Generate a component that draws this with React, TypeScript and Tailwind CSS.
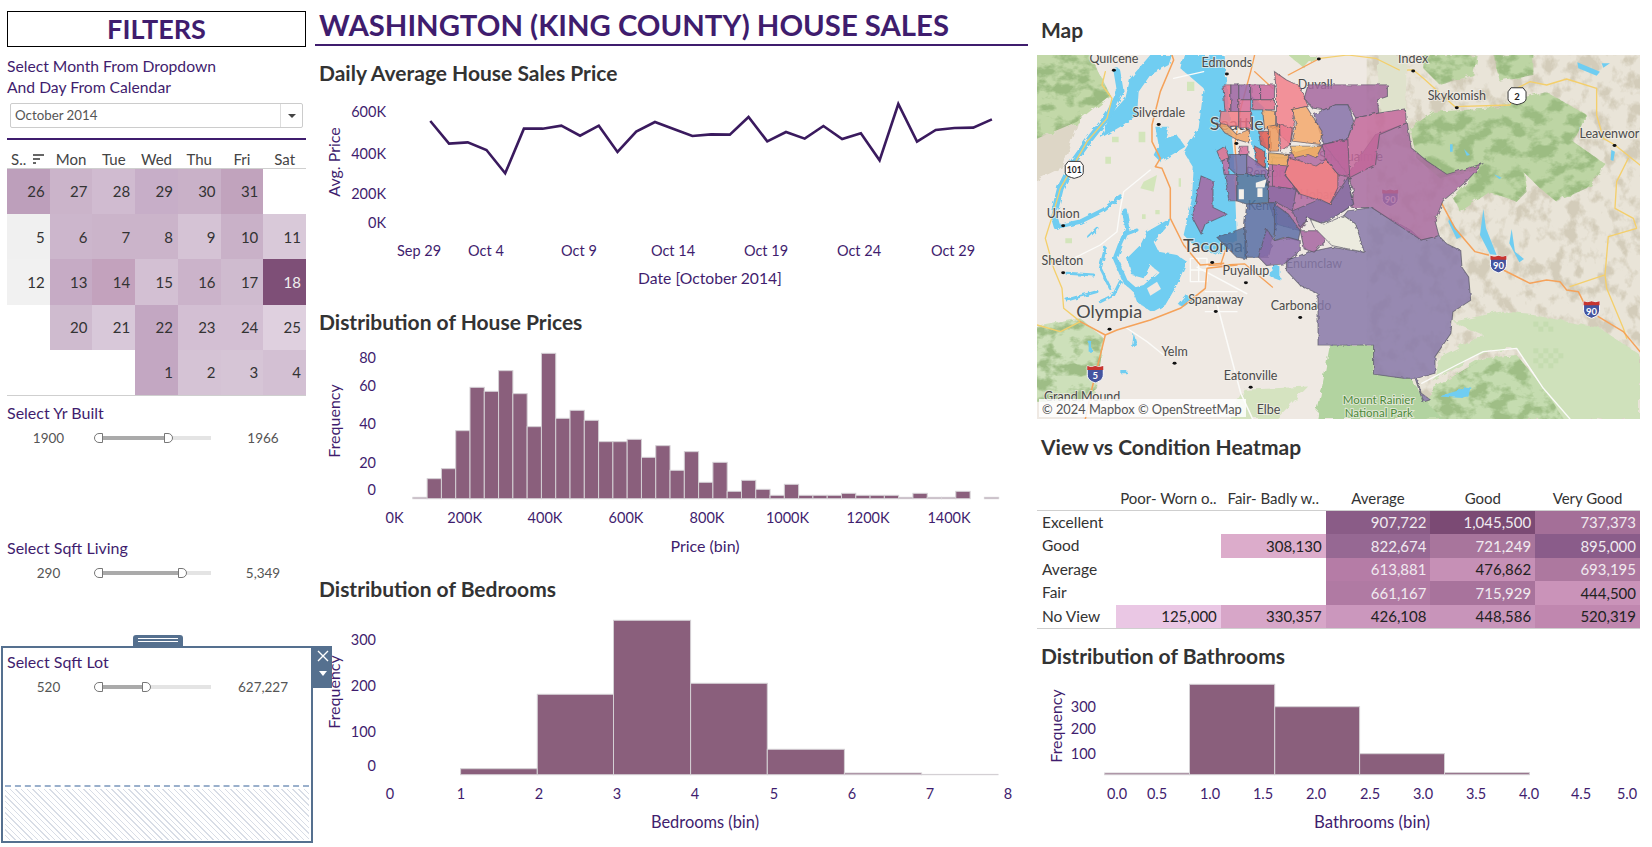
import React from "react";

const purple = "#3f1d6e";

const calendar: (null | [string, string, boolean?])[][] = [
  [["26", "#bd9fbb"], ["27", "#cbb4ca"], ["28", "#d0bbd0"], ["29", "#c7aec8"], ["30", "#c9b1c8"], ["31", "#c1a3bd"], null],
  [["5", "#f0f0f0"], ["6", "#ccb6cc"], ["7", "#cbb4ca"], ["8", "#cbb4ca"], ["9", "#d5c3d5"], ["10", "#c9b1c8"], ["11", "#d9c9d9"]],
  [["12", "#f1f1f1"], ["13", "#c6abc5"], ["14", "#c3a2bd"], ["15", "#d3c0d3"], ["16", "#cbb3ca"], ["17", "#cfbbcf"], ["18", "#7e4f77", true]],
  [null, ["20", "#cfbbcf"], ["21", "#d8c8d9"], ["22", "#c3a7c2"], ["23", "#d3bfd3"], ["24", "#d3bfd3"], ["25", "#dfd0df"]],
  [null, null, null, ["1", "#c3a7c2"], ["2", "#d5c3d5"], ["3", "#d6c5d6"], ["4", "#d3c0d3"]],
];

const heatRows: [string, (null | [string, string, boolean?])[]][] = [
  ["Excellent", [null, null, ["907,722", "#8a5c87", true], ["1,045,500", "#7b4a74", true], ["737,373", "#a46f98", true]]],
  ["Good", [null, ["308,130", "#dcaccb"], ["822,674", "#966893", true], ["721,249", "#a8759c", true], ["895,000", "#8a5c8a", true]]],
  ["Average", [null, null, ["613,881", "#b57ca6", true], ["476,862", "#c690b6"], ["693,195", "#ad789f", true]]],
  ["Fair", [null, null, ["661,167", "#b07aa3", true], ["715,929", "#a8739c", true], ["444,500", "#ca93b9"]]],
  ["No View", [["125,000", "#eac7e4"], ["330,357", "#d7a6c8"], ["426,108", "#cb97bd"], ["448,586", "#c894ba"], ["520,319", "#c087af"]]],
];

// traced from the reference, page coordinates come out of the helpers below
const lineY = [363, 431, 427, 450, 520, 386, 386, 377, 407, 377, 456, 395, 366, 387, 408, 403, 404, 351, 424, 396, 416, 378, 417, 400, 481, 312, 425, 390, 384, 383, 358];
const priceTops = [592, 536, 506, 392, 262, 274, 212, 281, 380, 160, 355, 331, 361, 425, 425, 418, 472, 437, 511, 455, 547, 487, 574, 541, 568, 586, 553, 586, 586, 586, 580, 586, 586, 586, 592, 580, 592, 592, 574, 0, 592];

const Label = ({ x, y, children, anchor = "end", size = 14.5 }: { x: number; y: number; children: React.ReactNode; anchor?: "start" | "middle" | "end"; size?: number }) => (
  <text x={x} y={y} textAnchor={anchor} dominantBaseline="central" fontSize={size} fill={purple}>
    {children}
  </text>
);

const SideLabel = ({ x, y, children }: { x: number; y: number; children: React.ReactNode }) => (
  <text x={x} y={y} textAnchor="middle" dominantBaseline="central" fontSize="16" fill={purple} transform={`rotate(-90 ${x} ${y})`}>
    {children}
  </text>
);

const Bar = ({ x1, x2, top, base }: { x1: number; x2: number; top: number; base: number }) => (
  <rect x={x1} y={top} width={x2 - x1} height={base - top} fill="#8a5f7c" stroke="#d4d0d4" strokeWidth="1" />
);

const Heading = ({ children, className }: { children: React.ReactNode; className: string }) => (
  <div className={`flex items-center pl-1 text-[21px] font-bold text-[#333333] ${className}`}>{children}</div>
);

const Slider = ({ title, min, max, thumb, className }: { title: string; min: string; max: string; thumb: number; className: string }) => (
  <div className={className}>
    <div className="h-[22px] text-[16px] leading-[22px]" style={{ color: purple }}>{title}</div>
    <div className="mt-[4px] flex h-5 items-center text-[13.5px] text-[#555555]">
      <div className="w-[83px] shrink-0 text-center">{min}</div>
      <div className="relative ml-[10px] h-1 w-[111px] shrink-0 bg-[#e4e4e4]">
        <div className="h-1 bg-[#aaaaaa]" style={{ width: thumb }} />
        <div className="absolute top-[-3px] left-[-6px] h-[10px] w-[9px] rounded-l-full border border-[#777777] bg-white" />
        <div className="absolute top-[-3px] h-[10px] w-[9px] rounded-r-full border border-[#777777] bg-white" style={{ left: thumb - 1 }} />
      </div>
      <div className="w-[104px] shrink-0 text-center">{max}</div>
    </div>
  </div>
);

const px = (x: number) => (x - 16) * 0.3964;
const py = (y: number) => (y - 130) * 0.3315;

const MapText = ({ x, y, children, size = 12.5, fill = "#4a4a4a" }: { x: number; y: number; children: React.ReactNode; size?: number; fill?: string }) => (
  <text x={px(x)} y={py(y)} textAnchor="middle" dominantBaseline="central" fontSize={size} fill={fill} stroke="#f3efe9" strokeWidth="2" paintOrder="stroke" strokeOpacity="0.7">
    {children}
  </text>
);

const Shield = ({ x, y, n, kind }: { x: number; y: number; n: string; kind: "us" | "i" }) => (
  <g transform={`translate(${px(x) - 9} ${py(y) - 9})`}>
    {kind === "i" ? (
      <>
        <path d="M1 1 L5 2 L9 1 L13 2 L17 1 V10 C17 15 12 17 9 18 C6 17 1 15 1 10 Z" fill="#44549f" stroke="#fff" strokeWidth="1" />
        <path d="M1 1 L5 2 L9 1 L13 2 L17 1 V5 H1 Z" fill="#c8352f" />
      </>
    ) : (
      <path d="M3 1 H15 L18 5 V12 C18 16 12 17 9 18 C6 17 0 16 0 12 V5 Z" fill="#fff" stroke="#333" strokeWidth="1" />
    )}
    <text x="9" y={kind === "i" ? 11 : 9.5} textAnchor="middle" dominantBaseline="central" fontSize={n.length > 2 ? 8.5 : 9.5} fontWeight="700" fill={kind === "i" ? "#fff" : "#222"}>
      {n}
    </text>
  </g>
);

const zips: [string, string][] = [
  ["600,430 650,430 740,400 800,385 800,490 815,580 790,600 730,640 700,620 680,660 620,640 600,575", "#b069a0"],
  ["800,600 860,590 900,620 960,660 985,688 1030,675 1050,700 1085,720 1088,770 1105,800 1110,870 1065,905 1060,970 1020,1040 1020,1090 975,1105 985,1150 1008,1170 990,1177 970,1105 940,1105 865,1093 865,1005 725,1005 725,850 680,825 645,780 645,750 700,725 760,710 840,725 820,640 790,615", "#8777a9"],
  ["800,490 870,370 950,335 960,410 1000,450 1050,490 1140,458 1100,510 1040,570 1020,630 1030,675 985,688 930,645 860,590 810,590 815,540", "#a96aa0"],
  ["700,220 900,220 900,255 875,265 878,305 820,320 800,280 770,280 740,295 710,290 690,260", "#a5669f"],
  ["820,320 880,305 945,292 948,335 880,370 870,460 805,500 780,460 740,400 800,380", "#c4689b"],
  ["740,295 770,280 800,280 815,330 800,380 740,400 715,310", "#8470a8"],
  ["735,400 800,385 805,500 775,490 745,445", "#bb689d"],
  ["615,180 645,205 680,225 700,285 660,295 665,340 655,400 620,360 620,240", "#f2808a"],
  ["660,295 695,285 735,360 730,400 660,390 670,340", "#f4a86d"],
  ["655,405 735,405 720,440 700,430 665,440", "#f6b55f"],
  ["655,440 720,465 745,445 775,490 775,530 755,580 720,565 680,550 640,490", "#f58283"],
  ["610,440 655,440 640,490 680,550 665,535 610,525", "#c46b9d"],
  ["575,360 605,360 605,420 580,400", "#e0584f"],
  ["565,405 590,420 590,470 570,462", "#e0584f"],
  ["600,425 650,430 650,465 600,460", "#f7bb64"],
  ["628,340 660,350 655,400 630,420", "#ea7a8c"],
  ["485,220 505,220 505,300 490,300", "#e86f8a"],
  ["505,220 525,220 525,300 505,300", "#9c62a2"],
  ["525,220 555,220 555,265 525,265", "#9a68a8"],
  ["525,265 555,265 555,300 525,300", "#d86b97"],
  ["555,220 580,220 580,265 555,265", "#c0649e"],
  ["580,220 615,220 615,265 580,265", "#c9649b"],
  ["560,265 615,265 615,295 560,295", "#e06f8a"],
  ["480,300 525,300 525,345 475,345", "#f27d85"],
  ["525,300 555,300 555,350 525,350", "#e77088"],
  ["470,335 495,340 520,370 550,355 550,395 520,385 490,365", "#f0a468"],
  ["585,295 618,300 618,350 590,355", "#f4a868"],
  ["600,345 628,340 625,420 600,420", "#ee9a5e"],
  ["530,405 548,405 548,430 525,430", "#d86a9a"],
  ["470,420 490,405 500,440 480,450", "#e86f8c"],
  ["483,450 500,440 500,490 488,490", "#c46a9e"],
  ["500,430 545,430 545,490 518,490 500,470", "#6b6fa8"],
  ["545,430 600,480 600,525 590,490 545,490", "#8a6aa8"],
  ["490,490 520,490 520,570 500,570", "#8a6aa5"],
  ["520,490 590,490 600,530 600,575 545,580 520,570", "#46709d"],
  ["545,580 620,575 620,640 600,740 540,740 540,640", "#566ea3"],
  ["470,680 540,650 545,745 520,740", "#4f709e"],
  ["600,525 670,535 660,600 620,575 600,575", "#8c6aa5"],
  ["660,600 730,565 755,580 800,500 815,580 790,600 740,640 700,620 680,650", "#8470a5"],
  ["615,580 650,610 680,660 675,690 640,680 615,690", "#5d6ea5"],
  ["680,660 745,660 745,690 715,725 690,715", "#a765a0"],
  ["575,740 595,655 615,690 650,680 680,690 680,720 640,760 595,765", "#8a6aa8"],
  ["430,495 460,510 460,590 495,610 440,640 430,670 408,620", "#a865a0"],
];

const checks = [[400, 800], [430, 800], [415, 815], [445, 815], [400, 880], [430, 880], [460, 880], [415, 895], [445, 895], [400, 910], [430, 910], [460, 910], [415, 925], [445, 925], [475, 895]];

const HouseMap = () => (
  <svg width="603" height="364" viewBox="0 0 603 364" className="block">
    <defs>
      <filter id="rough" x="-10%" y="-10%" width="120%" height="120%">
        <feTurbulence type="fractalNoise" baseFrequency="0.03" numOctaves="3" seed="4" />
        <feDisplacementMap in="SourceGraphic" scale="22" />
      </filter>
      <filter id="wobble" x="-5%" y="-5%" width="110%" height="110%">
        <feTurbulence type="fractalNoise" baseFrequency="0.06" numOctaves="2" seed="7" />
        <feDisplacementMap in="SourceGraphic" scale="12" />
      </filter>
      <filter id="edge" x="-5%" y="-5%" width="110%" height="110%">
        <feTurbulence type="fractalNoise" baseFrequency="0.07" numOctaves="2" seed="2" />
        <feDisplacementMap in="SourceGraphic" scale="9" />
      </filter>
      <filter id="hills" x="0" y="0" width="100%" height="100%" colorInterpolationFilters="sRGB">
        <feTurbulence type="fractalNoise" baseFrequency="0.018 0.026" numOctaves="4" seed="9" />
        <feColorMatrix values="0 0 0 0 0.56  0 0 0 0 0.70  0 0 0 0 0.46  5 0 0 0 -2.2" />
        <feComposite in2="SourceAlpha" operator="in" />
      </filter>
      <filter id="ridges" x="0" y="0" width="100%" height="100%" colorInterpolationFilters="sRGB">
        <feTurbulence type="fractalNoise" baseFrequency="0.022 0.018" numOctaves="4" seed="21" />
        <feColorMatrix values="0 0 0 0 0.80  0 0 0 0 0.77  0 0 0 0 0.69  5 0 0 0 -2.4" />
        <feComposite in2="SourceAlpha" operator="in" />
      </filter>
      <clipPath id="mapclip"><rect width="603" height="364" /></clipPath>
    </defs>
    <g clipPath="url(#mapclip)">
      <rect width="603" height="364" fill="#efe9e3" />

      {/* east half, traced at 3x */}
      <g transform="translate(363 0) scale(0.3333)">
        <rect x="-100" width="820" height="1092" fill="#e9e4d8" />
        <rect x="-100" width="820" height="1092" fill="#000" filter="url(#ridges)" opacity="0.75" />
        <g filter="url(#rough)">
          <path d="M70 0 H230 L220 60 L120 90 L70 40 Z M280 0 H400 L400 60 L300 80 Z M30 220 L100 170 L280 160 L440 110 L560 180 L520 260 L620 330 L560 400 L470 440 L420 400 L370 350 L380 410 L350 440 L270 410 L180 470 L160 430 L240 340 L120 370 L50 310 Z" fill="#bdd5a4" />
          <path d="M400 780 L600 820 L720 900 V1092 H490 L430 1000 L350 880 L250 890 L100 980 L130 900 L250 840 L160 800 L300 770 Z" fill="#cfe1bb" />
          <path d="M100 1000 L250 910 L350 900 L440 1010 L490 1092 H60 Z" fill="#c5dcb0" />
        </g>
        <path d="M70 0 H230 L220 60 L120 90 L70 40 Z M280 0 H400 L400 60 L300 80 Z M30 220 L100 170 L280 160 L440 110 L560 180 L520 260 L620 330 L560 400 L470 440 L420 400 L370 350 L380 410 L350 440 L270 410 L180 470 L160 430 L240 340 L120 370 L50 310 Z M100 1000 L250 910 L350 900 L440 1010 L490 1092 H60 Z" fill="#000" filter="url(#hills)" opacity="0.7" />
        <g fill="#c5dcb0">
          {checks.map(([x, y]) => (
            <rect key={`${x}-${y}`} x={x} y={y} width="15" height="15" />
          ))}
        </g>
        <g fill="#6fcdf1">
          <path d="M250 462 L258 520 L290 600 L270 598 L240 540 Z" />
          <path d="M335 522 L345 590 L372 612 L358 622 L328 565 Z" />
          <path d="M148 490 L185 545 L170 552 L145 500 Z" />
          <path d="M532 22 L600 50 L590 62 L535 40 Z M605 25 L630 25 L610 38 Z" />
          <path d="M165 1022 L212 995 L205 1025 Z" />
          <path d="M150 268 H158 V290 H150 Z M192 282 L210 300 L200 302 Z M282 358 L305 368 L298 372 Z M634 285 L645 290 L640 318 L632 315 Z" />
        </g>
        <g fill="none" strokeLinecap="round" strokeLinejoin="round">
          <path d="M65 985 L170 930 L250 890 L350 880 L430 1000 L510 1092" stroke="#fbfbf9" strokeWidth="4" />
          <path d="M0 45 L40 45 L70 70 L165 155 L330 150 L350 100 L390 80 L440 90 L500 72 L590 100 L590 180 L610 250 L645 270 L720 330 M685 310 L650 380 L645 460 L700 490 L710 520 L625 545 L615 660 L510 695 M615 660 L620 700 L670 820 L680 850" stroke="#f4cf6b" strokeWidth="4" />
          <path d="M125 445 L165 520 L225 590 L265 600 M310 645 L390 685 L440 675 L480 680 L500 705 L535 710 L550 740 M595 785 L670 830 L720 890" stroke="#f5a25a" strokeWidth="4.5" />
        </g>
      </g>

      {/* middle strip */}
      <g transform="scale(0.3964 0.3315) translate(-16 -130)">
        <g filter="url(#rough)">
          <path d="M755 1005 H865 V1093 L960 1105 L1000 1180 L1040 1228 H720 Z" fill="#b2d3a0" />
          <path d="M700 1130 L540 1140 L500 1228 H620 Z" fill="#d5e3c0" />
          <path d="M650 130 L720 130 L690 170 Z" fill="#c4dcaa" />
          <path d="M875 130 H950 V300 H880 Z" fill="#dfe2cc" />
        </g>
        <g filter="url(#wobble)" fill="#6fcdf1">
          <path d="M555 250 L590 290 L585 360 L600 470 L570 470 L555 380 Z" />
          <path d="M610 760 L630 770 L630 810 L605 800 Z" />
          <path d="M1030 1160 L1110 1130 L1090 1165 Z" />
        </g>
        <g fill="none" strokeLinecap="round" strokeLinejoin="round">
          <path d="M470 880 L530 1150 L560 1228 M490 130 L440 190 M420 770 L545 850" stroke="#fbfbf9" strokeWidth="4" />
          <path d="M565 130 L555 180 L530 290 L515 400 L520 470 L510 650 L480 760 M450 765 L540 760 L610 830 M565 180 L610 230 M650 190 L730 140" stroke="#f5a25a" strokeWidth="3.6" />
          <path d="M730 140 L800 130 L870 140 L930 175" stroke="#f4cf6b" strokeWidth="3.5" />
        </g>
      </g>

      {/* west half, traced at 3x */}
      <g transform="scale(0.3333)">
        <g filter="url(#rough)">
          <path d="M-20 -20 H150 L220 120 L120 200 L-20 260 Z" fill="#c2d8a8" />
          <path d="M-20 260 L120 200 L80 330 L-20 380 Z" fill="#ddd6c6" />
          <path d="M-20 820 L130 790 L200 850 L180 1000 L130 1040 H-20 Z" fill="#cde0ba" />
        </g>
        <path d="M-20 -20 H150 L220 120 L120 200 L-20 260 Z M-20 820 L130 790 L200 850 L180 1000 L130 1040 H-20 Z" fill="#000" filter="url(#hills)" opacity="0.75" />
        <g fill="#d3e5bb">
          <path d="M305 230 H325 V262 H305 Z M225 245 H245 V262 H225 Z M320 380 L360 360 L350 410 L310 400 Z M450 80 H472 V108 H450 Z M205 305 H222 V326 H205 Z M355 465 H368 V478 H355 Z M315 478 H326 V492 H315 Z M85 550 H105 V565 H85 Z M425 370 H432 V395 H425 Z" />
        </g>
        <g filter="url(#wobble)" fill="#6fcdf1">
          <path d="M440 0 H560 L590 300 L600 560 L540 600 L470 570 L440 540 L465 430 L470 340 L440 290 L485 220 L500 100 L430 40 Z" />
          <path d="M340 0 H405 L395 30 L340 60 L305 110 L300 180 L250 215 L190 250 L220 180 L265 130 L280 70 Z" />
          <path d="M355 215 L395 215 L385 250 L420 240 L445 275 L370 320 L350 300 L365 270 Z" />
          <path d="M400 490 L395 510 L350 560 L365 590 L420 600 L450 620 L420 690 L385 750 L345 772 L300 740 L285 700 L320 690 L365 650 L340 630 L320 670 L285 660 L270 610 L310 570 L330 530 Z" />
          <path d="M450 720 L470 735 L440 755 L425 750 Z M290 835 L302 875 L285 875 Z M155 860 H165 V890 H155 Z M250 945 H268 V955 H250 Z" />
        </g>
        <g filter="url(#wobble)" fill="none" stroke="#6fcdf1" strokeLinecap="round" strokeLinejoin="round">
          <path d="M240 50 L250 110 L215 180 L160 250 L110 320 L70 400 L50 480 L60 515" strokeWidth="20" />
          <path d="M60 515 L130 500 L200 465 L250 425" strokeWidth="13" />
          <path d="M262 465 L272 520 L250 570 L235 610 L265 680 L300 710" strokeWidth="15" />
          <path d="M250 680 L230 720 L190 740 M205 580 L190 640 L220 700 M170 660 L90 655 M180 710 L90 735 M180 520 L155 545 M260 540 L300 525" strokeWidth="9" />
        </g>
        <path d="M330 700 L360 680 L372 702 L340 722 Z" fill="#efe9e3" />
        <g fill="none" strokeLinecap="round" strokeLinejoin="round">
          <path d="M340 345 L260 410 L250 460 L240 530 L190 570 L110 610 M410 70 L500 50 M460 610 H510 V680 H460 Z M485 610 V680 M460 645 H510 M505 710 H600 M505 770 H600 M270 820 L330 860 L380 900" stroke="#fbfbf9" strokeWidth="4" />
          <path d="M205 50 L195 90 L225 130 L210 190 L150 260 L110 330 L70 400 L50 470 L25 550 L50 640 L75 700 L80 760 L130 800 L70 830 L0 810" stroke="#f4cf6b" strokeWidth="4" />
          <path d="M405 0 L410 15 L370 110 L345 210 L345 260 L370 310 L355 335 L375 340 L400 400 L400 490 L440 570 L490 630 L560 625 M600 630 L510 640 L505 700 L430 760 L340 795 L240 825 L205 840 L130 800 M205 840 L190 900 L165 1000 L145 1092" stroke="#f5a25a" strokeWidth="4.5" />
        </g>
      </g>

      <g transform="scale(0.3964 0.3315) translate(-16 -130)">
        <g fill="#111">
          {[[210, 176], [495, 187], [727, 142], [965, 178], [323, 340], [1075, 289], [1473, 403], [82, 645], [82, 787], [458, 756], [543, 817], [467, 904], [680, 922], [199, 957], [363, 1060], [555, 1132], [519, 397], [593, 520]].map(([x, y]) => (
            <ellipse key={`${x}-${y}`} cx={x} cy={y} rx="5" ry="4.5" />
          ))}
        </g>
      </g>
      <MapText x={210} y={140}>Quilcene</MapText>
      <MapText x={495} y={152}>Edmonds</MapText>
      <MapText x={718} y={220}>Duvall</MapText>
      <MapText x={965} y={142}>Index</MapText>
      <MapText x={323} y={303}>Silverdale</MapText>
      <MapText x={520} y={335} size={18}>Seattle</MapText>
      <MapText x={1075} y={253}>Skykomish</MapText>
      <MapText x={1460} y={368}>Leavenwor</MapText>
      <MapText x={808} y={435}>Snoqualmie</MapText>
      <MapText x={593} y={483}>Renton</MapText>
      <MapText x={727} y={550}>Hobart</MapText>
      <MapText x={82} y={608}>Union</MapText>
      <MapText x={580} y={583}>Kent</MapText>
      <MapText x={460} y={702} size={18}>Tacoma</MapText>
      <MapText x={80} y={750}>Shelton</MapText>
      <MapText x={543} y={780}>Puyallup</MapText>
      <MapText x={715} y={760}>Enumclaw</MapText>
      <MapText x={467} y={868}>Spanaway</MapText>
      <MapText x={682} y={885}>Carbonado</MapText>
      <MapText x={198} y={903} size={18}>Olympia</MapText>
      <MapText x={363} y={1023}>Yelm</MapText>
      <MapText x={555} y={1096}>Eatonville</MapText>
      <MapText x={130} y={1160}>Grand Mound</MapText>
      <MapText x={600} y={1198}>Elbe</MapText>
      <MapText x={878} y={1170} size={11.5} fill="#4e8a3c">Mount Rainier</MapText>
      <MapText x={878} y={1207} size={11.5} fill="#4e8a3c">National Park</MapText>
      <Shield x={110} y={475} n="101" kind="us" />
      <Shield x={1227} y={253} n="2" kind="us" />
      <Shield x={907} y={560} n="90" kind="i" />
      <Shield x={1180} y={760} n="90" kind="i" />
      <Shield x={1415} y={897} n="90" kind="i" />
      <Shield x={163} y={1092} n="5" kind="i" />
      <g transform="scale(0.3964 0.3315) translate(-16 -130)">
        <g filter="url(#edge)" stroke="#5b5a68" strokeWidth="2.6" strokeOpacity="0.75" fillOpacity="0.84">
          {zips.map(([points, fill]) => (
            <polygon key={points} points={points} fill={fill} />
          ))}
        </g>
        <path d="M525 535 H538 V565 H525 Z M572 532 H585 V558 H572 Z M568 515 L595 505 L590 530 L568 530 Z" fill="#f4f0ea" />
        <path d="M705 625 L740 640 L790 615 L820 640 L842 725 L760 705 L715 650 Z" fill="#ecebdf" stroke="#5b5a68" strokeWidth="2" filter="url(#edge)" />
      </g>
      <rect x="2" y="344" width="207" height="18" fill="#ffffff" fillOpacity="0.85" />
      <text x="5" y="353.5" dominantBaseline="central" fontSize="12.8" fill="#555555">© 2024 Mapbox © OpenStreetMap</text>
    </g>
  </svg>
);

export default function App() {
  return (
    <div className="flex h-[847px] w-[1652px] overflow-hidden bg-white [font-family:Lato,sans-serif]">
      <div className="relative z-10 w-[315px] shrink-0">
        <div className="mt-[11px] ml-[7px] flex h-[36px] w-[299px] items-center justify-center border border-black text-[27px] font-bold" style={{ color: purple }}>
          FILTERS
        </div>
        <div className="mt-[9px] ml-[7px] text-[15.7px] leading-[21px]" style={{ color: purple }}>
          Select Month From Dropdown
          <br />
          And Day From Calendar
        </div>
        <div className="mt-[5px] ml-[10px] flex h-[25px] w-[293px] items-center rounded-[2px] border border-[#cccccc] pl-1 text-[13.3px] text-[#555555]">
          <span className="flex-1">October 2014</span>
          <span className="flex h-full w-[22px] items-center justify-center border-l border-[#dddddd]">
            <span className="h-0 w-0 border-x-[4px] border-t-[4px] border-x-transparent border-t-[#444444]" />
          </span>
        </div>
        <div className="mt-[10px] ml-[7px] h-[2px] w-[299px]" style={{ background: purple }} />
        <div className="ml-[7px] w-[299px]">
          <div className="grid h-[29px] grid-cols-7 items-center border-b border-[#cfcfcf] pt-[8px] text-[15px] text-[#444444]">
            <div className="flex items-center pl-1">
              S..
              <svg width="11" height="10" viewBox="0 0 11 10" className="ml-[7px]">
                <rect width="11" height="2" fill="#666666" />
                <rect y="4" width="7" height="2" fill="#666666" />
                <rect y="8" width="3" height="2" fill="#666666" />
              </svg>
            </div>
            {["Mon", "Tue", "Wed", "Thu", "Fri", "Sat"].map((d) => (
              <div key={d} className="text-center">{d}</div>
            ))}
          </div>
          <div className="border-b border-[#cfcfcf]">
            {calendar.map((row, r) => (
              <div key={r} className="grid h-[45.2px] grid-cols-7">
                {row.map((c, i) => (
                  <div
                    key={i}
                    className={`flex items-center justify-end pr-[5px] text-[15px] ${c && c[2] ? "text-[#eeeeee]" : "text-[#333333]"}`}
                    style={{ background: c ? c[1] : undefined }}
                  >
                    {c ? c[0] : ""}
                  </div>
                ))}
              </div>
            ))}
          </div>
        </div>
        <Slider title="Select Yr Built" min="1900" max="1966" thumb={65} className="mt-[6px] ml-[7px] h-[135px]" />
        <Slider title="Select Sqft Living" min="290" max="5,349" thumb={79} className="ml-[7px] h-[109px]" />
        <div className="relative ml-[1px] h-[197px] w-[312px] border-2 border-[#55708f] bg-white">
          <div className="absolute top-[-13px] left-[130px] flex h-[11px] w-[50px] flex-col items-center justify-center gap-[2px] rounded-t-[3px] bg-[#55708f]">
            <div className="h-px w-10 bg-white" />
            <div className="h-px w-10 bg-white" />
          </div>
          <div className="absolute top-[-2px] right-[-21px] flex h-[42px] w-[19px] flex-col items-center bg-[#55708f] pt-[4px]">
            <svg width="12" height="12" viewBox="0 0 12 12"><path d="M1 1 L11 11 M11 1 L1 11" stroke="#ffffff" strokeWidth="1.4" /></svg>
            <div className="mt-[9px] h-0 w-0 border-x-[4px] border-t-[5px] border-x-transparent border-t-white" />
          </div>
          <Slider title="Select Sqft Lot" min="520" max="627,227" thumb={43} className="mt-[3px] ml-[4px]" />
          <div className="mt-[88px] ml-[2px] h-[2px] w-[304px] border-t-2 border-dashed border-[#9ab0cc]" />
          <div className="mt-[2px] ml-[2px] h-[51px] w-[304px] bg-[repeating-linear-gradient(45deg,#ffffff_0,#ffffff_3px,#d8dde6_3px,#d8dde6_4px)]" />
        </div>
      </div>

      <div className="w-[718px] shrink-0">
        <div className="flex h-[46px] w-[713px] items-center border-b-2 pt-[5px] pl-1 text-[29.3px] font-bold" style={{ color: purple, borderColor: purple }}>
          WASHINGTON (KING COUNTY) HOUSE SALES
        </div>
        <Heading className="h-[54px]">Daily Average House Sales Price</Heading>
        <svg width="718" height="200" viewBox="315 100 718 200" className="block">
          <Label x={386} y={111}>600K</Label>
          <Label x={386} y={153}>400K</Label>
          <Label x={386} y={193}>200K</Label>
          <Label x={386} y={222}>0K</Label>
          <SideLabel x={333} y={162}>Avg. Price</SideLabel>
          <polyline
            fill="none"
            stroke="#3a1a5e"
            strokeWidth="2.6"
            points={lineY.map((y, i) => `${430.3 + i * 18.72},${y / 3}`).join(" ")}
          />
          {[["Sep 29", 419], ["Oct 4", 486], ["Oct 9", 579], ["Oct 14", 673], ["Oct 19", 766], ["Oct 24", 859], ["Oct 29", 953]].map(([t, x]) => (
            <Label key={t} x={x as number} y={250} anchor="middle">{t}</Label>
          ))}
          <Label x={710} y={278} anchor="middle" size={15.7}>Date [October 2014]</Label>
        </svg>

        <Heading className="h-[44px]">Distribution of House Prices</Heading>
        <svg width="718" height="226" viewBox="315 344 718 226" className="block">
          {[["80", 357], ["60", 385], ["40", 423], ["20", 462], ["0", 489]].map(([t, y]) => (
            <Label key={t} x={376} y={y as number}>{t}</Label>
          ))}
          <SideLabel x={333} y={421}>Frequency</SideLabel>
          {priceTops.map((t, i) =>
            t ? <Bar key={i} x1={310 + (224 + i * 31.12) / 2.178} x2={310 + (224 + (i + 1) * 31.12) / 2.178} top={300 + t / 3} base={498.7} /> : null
          )}
          {[["0K", 394.5], ["200K", 464.7], ["400K", 545], ["600K", 626], ["800K", 707], ["1000K", 787.5], ["1200K", 868], ["1400K", 949]].map(([t, x]) => (
            <Label key={t} x={x as number} y={517} anchor="middle">{t}</Label>
          ))}
          <Label x={705} y={545} anchor="middle" size={16}>Price (bin)</Label>
        </svg>

        <Heading className="h-[38px]">Distribution of Bedrooms</Heading>
        <svg width="718" height="239" viewBox="315 608 718 239" className="block">
          {[["300", 639], ["200", 685], ["100", 731], ["0", 765]].map(([t, y]) => (
            <Label key={t} x={376} y={y as number}>{t}</Label>
          ))}
          <SideLabel x={333} y={692}>Frequency</SideLabel>
          <Bar x1={460.6} x2={537.3} top={768.7} base={774.7} />
          <Bar x1={537.3} x2={613.5} top={694.3} base={774.7} />
          <Bar x1={613.5} x2={690.6} top={620.3} base={774.7} />
          <Bar x1={690.6} x2={767.3} top={683.3} base={774.7} />
          <Bar x1={767.3} x2={844.4} top={749.3} base={774.7} />
          <Bar x1={844.4} x2={921.6} top={773} base={774.7} />
          <Bar x1={921.6} x2={998} top={774.4} base={774.7} />
          {[390, 461, 539, 617, 695, 774, 852, 930, 1008].map((x, i) => (
            <Label key={x} x={x} y={793} anchor="middle">{i}</Label>
          ))}
          <Label x={705} y={821} anchor="middle" size={16.4}>Bedrooms (bin)</Label>
        </svg>
      </div>

      <div className="ml-[4px] w-[603px] shrink-0">
        <Heading className="h-[55px] pt-[5px]">Map</Heading>
        <HouseMap />
        <Heading className="h-[56px]">View vs Condition Heatmap</Heading>
        <div className="flex h-[36px] items-end border-b border-[#cfcfcf] pb-[1px] text-[15px] text-[#333333]">
          <div className="w-[79px]" />
          {["Poor- Worn o..", "Fair- Badly w..", "Average", "Good", "Very Good"].map((h) => (
            <div key={h} className="w-[104.8px] text-center">{h}</div>
          ))}
        </div>
        <div className="border-b border-[#cfcfcf] text-[15px]">
          {heatRows.map(([name, cells]) => (
            <div key={name} className="flex h-[23.4px] items-center text-[#333333]">
              <div className="w-[79px] pl-[5px] text-[15.5px]">{name}</div>
              {cells.map((c, i) => (
                <div
                  key={i}
                  className={`flex h-full w-[104.8px] items-center justify-end pr-[4px] ${c && c[2] ? "text-[#f0eaf0]" : "text-[#222222]"}`}
                  style={{ background: c ? c[1] : undefined }}
                >
                  {c ? c[0] : ""}
                </div>
              ))}
            </div>
          ))}
        </div>
        <Heading className="h-[54px]">Distribution of Bathrooms</Heading>
        <svg width="615" height="164" viewBox="1037 683 615 164" className="block">
          {[["300", 706], ["200", 728], ["100", 753]].map(([t, y]) => (
            <Label key={t} x={1096} y={y as number}>{t}</Label>
          ))}
          <SideLabel x={1055} y={726}>Frequency</SideLabel>
          <Bar x1={1104.6} x2={1189.5} top={773} base={774.7} />
          <Bar x1={1189.5} x2={1274.7} top={684.3} base={774.7} />
          <Bar x1={1274.7} x2={1359.6} top={706.7} base={774.7} />
          <Bar x1={1359.6} x2={1444.5} top={753.7} base={774.7} />
          <Bar x1={1444.5} x2={1529.4} top={772.7} base={774.7} />
          {[["0.0", 1117], ["0.5", 1157], ["1.0", 1210], ["1.5", 1263], ["2.0", 1316], ["2.5", 1370], ["3.0", 1423], ["3.5", 1476], ["4.0", 1529], ["4.5", 1581], ["5.0", 1627]].map(([t, x]) => (
            <Label key={t} x={x as number} y={793} anchor="middle">{t}</Label>
          ))}
          <Label x={1372} y={821} anchor="middle" size={16.8}>Bathrooms (bin)</Label>
        </svg>
      </div>
    </div>
  );
}
